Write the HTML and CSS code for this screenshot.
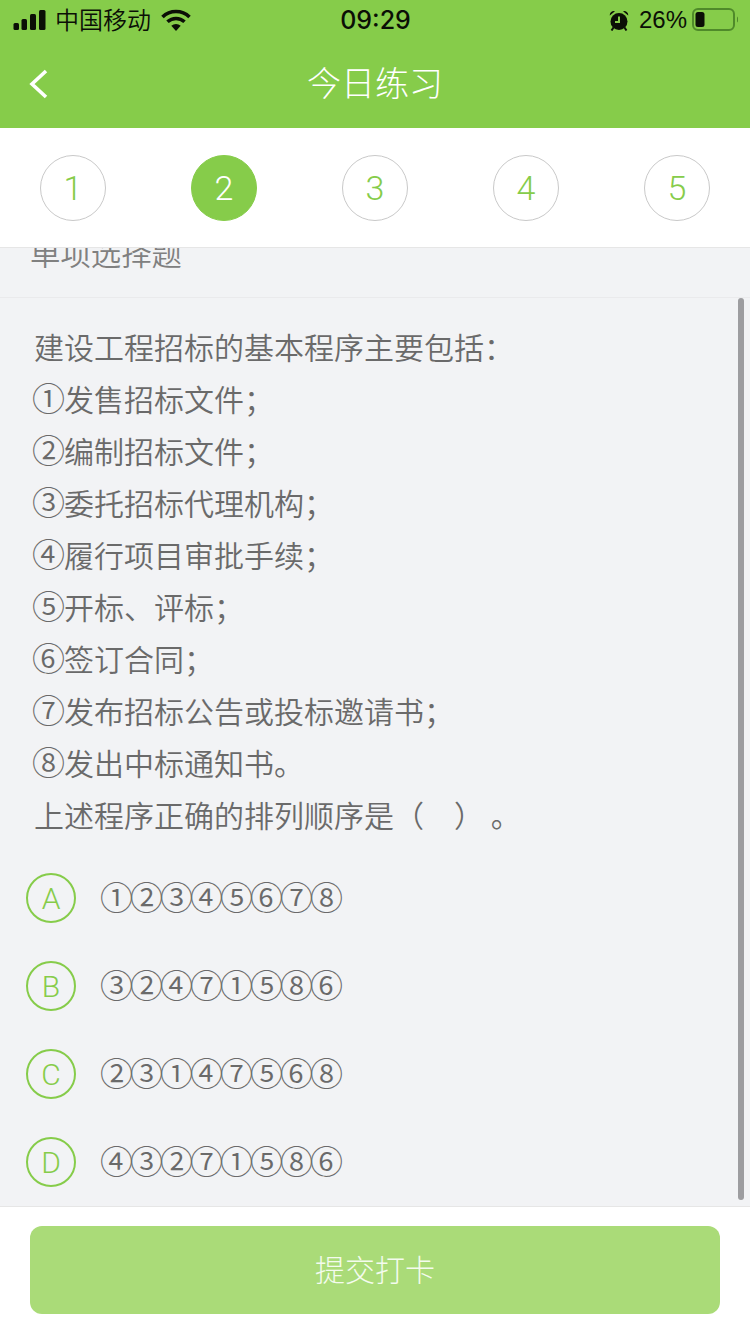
FILE: index.html
```html
<!DOCTYPE html>
<html lang="zh-CN">
<head>
<meta charset="utf-8">
<title>今日练习</title>
<link rel="stylesheet" href="styles.css">
</head>
<body>
<div class="app">
  <header class="header">
    <div class="status">
      <div class="status-left">
        <svg class="i-signal" width="34" height="22" viewBox="0 0 34 22" aria-hidden="true">
          <rect x="0.5" y="14" width="5.5" height="7" rx="1.5"/>
          <rect x="8.5" y="10" width="5.5" height="11" rx="1.5"/>
          <rect x="17" y="5" width="6" height="16" rx="1.5"/>
          <rect x="26" y="1" width="6.5" height="20" rx="1.5"/>
        </svg>
        <span class="carrier">中国移动</span>
        <svg class="i-wifi" width="30" height="22" viewBox="0 0 30 22" aria-hidden="true">
          <path class="arc" d="M1.5 8A19.5 19.5 0 0 1 28.500 8"/>
          <path class="arc" d="M6.500 12.800A12.500 12.500 0 0 1 23.500 12.800"/>
          <path d="M10.300 16.800a7 7 0 0 1 9.400 0L15 22z"/>
        </svg>
      </div>
      <div class="time">09:29</div>
      <div class="status-right">
        <svg class="i-alarm" width="20" height="21" viewBox="0 0 20 21" aria-hidden="true">
          <circle cx="10" cy="11.500" r="8.500"/>
          <path d="M0.800 5.500A4 4 0 0 1 6 1.200zM19.200 5.500A4 4 0 0 0 14 1.200z"/>
          <path class="leg" d="M4.500 17.500l-2 3M15.500 17.500l2 3"/>
          <path class="hand" d="M10 6.500v5.500H6"/>
        </svg>
        <span class="battery-pct">26%</span>
        <svg class="i-battery" width="46" height="24" viewBox="0 0 46 24" aria-hidden="true">
          <rect class="shell" x="1" y="1" width="41" height="21" rx="5"/>
          <rect x="3.500" y="4" width="9" height="15" rx="2.500"/>
          <path class="nub" d="M45 8.500a4 4 0 0 1 0 6z"/>
        </svg>
      </div>
    </div>
    <nav class="nav">
      <svg class="back" width="20" height="30" viewBox="0 0 20 30" aria-hidden="true">
        <path d="M17 2 3 15l14 13"/>
      </svg>
      <h1 class="title">今日练习</h1>
    </nav>
  </header>

  <div class="steps">
    <span class="step">1</span>
    <span class="step step-active">2</span>
    <span class="step">3</span>
    <span class="step">4</span>
    <span class="step">5</span>
  </div>

  <main class="main">
    <div class="content">
      <div class="section">单项选择题</div>
      <div class="question">
        <p class="line">建设工程招标的基本程序主要包括：</p>
        <p class="line line-num"><span class="num">①</span>发售招标文件；</p>
        <p class="line line-num"><span class="num">②</span>编制招标文件；</p>
        <p class="line line-num"><span class="num">③</span>委托招标代理机构；</p>
        <p class="line line-num"><span class="num">④</span>履行项目审批手续；</p>
        <p class="line line-num"><span class="num">⑤</span>开标、评标；</p>
        <p class="line line-num"><span class="num">⑥</span>签订合同；</p>
        <p class="line line-num"><span class="num">⑦</span>发布招标公告或投标邀请书；</p>
        <p class="line line-num"><span class="num">⑧</span>发出中标通知书。</p>
        <p class="line">上述程序正确的排列顺序是（　）&nbsp;。</p>
      </div>
      <ul class="options">
        <li class="option"><span class="letter">A</span><span class="answer num">①②③④⑤⑥⑦⑧</span></li>
        <li class="option"><span class="letter">B</span><span class="answer num">③②④⑦①⑤⑧⑥</span></li>
        <li class="option"><span class="letter">C</span><span class="answer num">②③①④⑦⑤⑥⑧</span></li>
        <li class="option"><span class="letter">D</span><span class="answer num">④③②⑦①⑤⑧⑥</span></li>
      </ul>
    </div>
    <div class="scrollbar"></div>
  </main>

  <footer class="footer">
    <button class="submit" type="button">提交打卡</button>
  </footer>
</div>
</body>
</html>
```
FILE: styles.css
```css
* { box-sizing: border-box; }
html, body { margin: 0; padding: 0; }
body {
  font-family: "Noto Sans CJK SC", "Liberation Sans", sans-serif;
  font-weight: 350;
  color: #6a6a6a;
  background: #f2f3f5;
}
.app {
  width: 750px;
  height: 1334px;
  display: flex;
  flex-direction: column;
  overflow: hidden;
}

/* header */
.header { height: 128px; background: #86cc4a; display: flex; flex-direction: column; }
.status {
  height: 40px;
  padding: 0 12px 0 13px;
  display: grid;
  grid-template-columns: 1fr auto 1fr;
  align-items: center;
  color: #0b0f06;
}
.status-left { display: flex; align-items: center; }
.status-right { display: flex; align-items: center; justify-content: flex-end; }
.carrier { font-size: 24px; line-height: 38px; height: 40px; margin-left: 8px; }
.i-signal { fill: #0b0f06; }
.i-wifi { margin-left: 10px; fill: #0b0f06; }
.i-wifi .arc { fill: none; stroke: #0b0f06; stroke-width: 3.6; }
.time { font-family: Inter, "Liberation Sans", sans-serif; font-size: 25px; font-weight: 500; letter-spacing: 0; }
.i-alarm { fill: #0b0f06; }
.i-alarm .leg { stroke: #0b0f06; stroke-width: 2; fill: none; }
.i-alarm .hand { stroke: #86cc4a; stroke-width: 2; fill: none; }
.battery-pct { font-family: "Liberation Sans", sans-serif; font-weight: 400; font-size: 24px; margin-left: 10px; }
.i-battery { margin-left: 5px; fill: #0b0f06; }
.i-battery .shell { fill: none; stroke: #4f8a2a; stroke-width: 2; }
.i-battery .nub { fill: #4f8a2a; }

.nav { height: 88px; position: relative; display: flex; align-items: center; justify-content: center; }
.back { position: absolute; left: 29px; top: 29px; fill: none; stroke: #fff; stroke-width: 3.6; }
.title { margin: 0 0 4px; font-size: 34px; font-weight: 300; color: #fff; line-height: 44px; }

/* steps */
.steps {
  height: 120px;
  padding: 27px 40px 0;
  background: #fff;
  border-bottom: 1px solid #e6e6e6;
  display: flex;
  justify-content: space-between;
  align-items: flex-start;
  position: relative;
  z-index: 1;
}
.step {
  width: 66px;
  height: 66px;
  border: 1px solid #c9c9c9;
  border-radius: 50%;
  display: flex;
  align-items: center;
  justify-content: center;
  font-family: Roboto, "Liberation Sans", sans-serif;
  font-weight: 300;
  font-size: 34px;
  color: #86cc4a;
}
.step-active { background: #86cc4a; border-color: #86cc4a; color: #fff; }

/* main */
.main { flex: 1; position: relative; overflow: hidden; background: #f2f3f5; }
.content { margin-top: -38px; }
.section {
  height: 88px;
  padding-left: 30px;
  border-bottom: 1px solid #eaeaec;
  font-size: 30.400px;
  line-height: 84px;
  color: #808080;
}
.question { padding: 22px 0 0 34px; }
.line { margin: 0; font-size: 30px; line-height: 52px; color: #6a6a6a; white-space: nowrap; }
.line-num { margin-left: -2px; }
.num { font-size: 33px; letter-spacing: -1px; line-height: 1; }
.options { list-style: none; margin: 14px 0 0; padding: 0 0 0 26px; }
.option { height: 88px; display: flex; align-items: center; }
.letter {
  width: 50px;
  height: 50px;
  border: 2px solid #86cc4a;
  border-radius: 50%;
  display: flex;
  align-items: center;
  justify-content: center;
  font-family: Roboto, "Liberation Sans", sans-serif;
  font-weight: 300;
  font-size: 30px;
  color: #86cc4a;
}
.answer { margin-left: 24px; padding-bottom: 4px; line-height: 52px; letter-spacing: -3px; color: #6a6a6a; }
.scrollbar {
  position: absolute;
  right: 6px;
  top: 50px;
  width: 6px;
  height: 902px;
  border-radius: 3px;
  background: #9d9da0;
}

/* footer */
.footer { height: 128px; padding: 19px 30px 0; background: #fff; border-top: 1px solid #e6e6e6; }
.submit {
  display: block;
  width: 100%;
  height: 88px;
  border: 0;
  border-radius: 12px;
  background: #aadb78;
  color: #f4fbee;
  font-family: inherit;
  font-weight: 300;
  font-size: 30px;
  padding: 0 0 4px;
}
```
